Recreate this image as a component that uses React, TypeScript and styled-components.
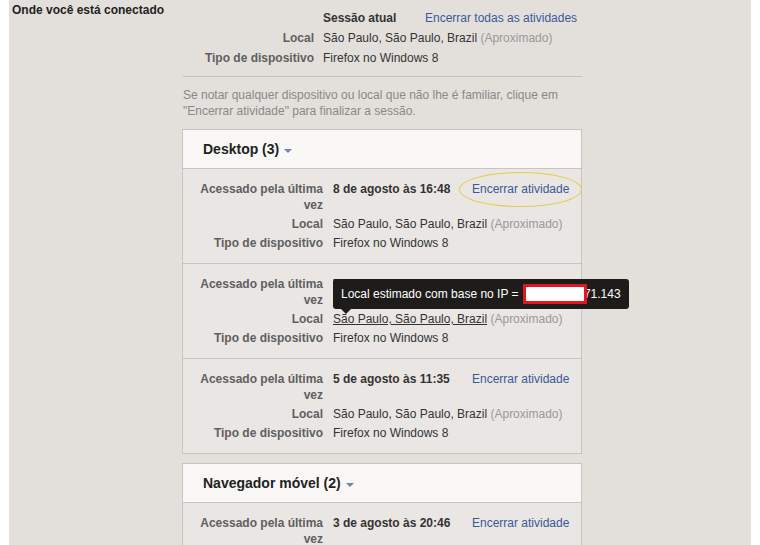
import styled, { createGlobalStyle } from "styled-components";

const GlobalStyle = createGlobalStyle`
  body {
    margin: 0;
    background: #fff;
    font-family: "Liberation Sans", Arial, sans-serif;
    font-size: 12px;
    color: #333;
  }
`;

const Page = styled.div`
  margin: 0 9px;
  min-height: 545px;
  background: #e3e0dc;
  display: grid;
  grid-template-columns: 170px 400px;
  padding: 2px 0 0 3px;
  box-sizing: border-box;
`;

const SectionLabel = styled.div`
  font-weight: bold;
  line-height: 16px;
  color: #222;
`;

const Column = styled.div`
  display: flex;
  flex-direction: column;
`;

const SessionGrid = styled.div`
  display: grid;
  grid-template-columns: 132px 93px 1fr;
  column-gap: 9px;
  margin-top: 6px;
  line-height: 16px;

  & > * {
    padding: 2px 0;
  }
`;

const Label = styled.div`
  font-weight: bold;
  color: #5f5f5f;
  text-align: right;
`;

const Value = styled.div<{ $bold?: boolean; $wide?: boolean }>`
  position: relative;
  color: #333;
  font-weight: ${(p) => (p.$bold ? "bold" : "normal")};
  grid-column: ${(p) => (p.$wide ? "2 / span 2" : "auto")};
  white-space: nowrap;
`;

const Muted = styled.span`
  color: #999;
`;

const Link = styled.a`
  position: relative;
  color: #3b5998;
  text-decoration: none;
  white-space: nowrap;
`;

const Highlight = styled.span`
  position: absolute;
  inset: -10px -13px -11px -13px;
  border: 1px solid #e0cf4c;
  border-radius: 50%;
  pointer-events: none;
`;

const Divider = styled.hr`
  border: 0;
  border-top: 1px solid #c4c1bd;
  margin: 8px 0 0 1px;
`;

const Notice = styled.p`
  margin: 10px 0 10px 1px;
  color: #888;
  line-height: 16px;
`;

const Card = styled.div`
  border: 1px solid #c8c5c1;
  background: #e9e6e3;
  margin-bottom: 9px;
`;

const CardHeader = styled.div`
  height: 38px;
  background: #f9f8f7;
  border-bottom: 1px solid #c8c5c1;
  display: flex;
  align-items: center;
  padding-left: 20px;
  font-size: 14px;
  font-weight: bold;
  color: #222;
  gap: 5px;
`;

const Caret = styled.span`
  width: 0;
  height: 0;
  border-left: 4px solid transparent;
  border-right: 4px solid transparent;
  border-top: 4px solid #6d84b4;
  margin-top: 3px;
`;

const Entry = styled.div`
  display: grid;
  grid-template-columns: 124px 129px 1fr;
  column-gap: 10px;
  row-gap: 3px;
  padding: 12px 0 12px 16px;
  line-height: 16px;
  border-bottom: 1px solid #c8c5c1;

  &:last-child {
    border-bottom: 0;
  }
`;

const Underlined = styled.span`
  text-decoration: underline;
`;

const Tooltip = styled.div`
  position: absolute;
  left: 0;
  bottom: calc(100% + 2px);
  height: 30px;
  display: flex;
  align-items: center;
  padding: 0 8px;
  background: #1e1c1b;
  border-radius: 3px;
  color: #fff;
  white-space: nowrap;
  z-index: 2;

  &::after {
    content: "";
    position: absolute;
    left: 8px;
    top: 100%;
    border-left: 5px solid transparent;
    border-right: 5px solid transparent;
    border-top: 5px solid #1e1c1b;
  }
`;

const Redacted = styled.span`
  position: relative;
  display: inline-block;
  width: 58px;
  height: 14px;
  background: #fff;
  border: 3px solid #e3151e;
  margin: 0 -3px 0 1px;
`;

type Session = {
  date: string;
  action?: boolean;
  highlight?: boolean;
  tooltip?: boolean;
};

const desktop: Session[] = [
  { date: "8 de agosto às 16:48", action: true, highlight: true },
  { date: "7 de agosto às 20:12", tooltip: true },
  { date: "5 de agosto às 11:35", action: true },
];

const mobile: Session[] = [{ date: "3 de agosto às 20:46", action: true }];

function SessionEntry({ s }: { s: Session }) {
  return (
    <Entry>
      <Label>Acessado pela última vez</Label>
      <Value $bold>{s.date}</Value>
      <div>
        {s.action && (
          <Link href="#">
            Encerrar atividade
            {s.highlight && <Highlight />}
          </Link>
        )}
      </div>
      <Label>Local</Label>
      <Value $wide>
        {s.tooltip ? (
          <>
            <Tooltip>
              Local estimado com base no IP =&nbsp;
              <Redacted />
              71.143
            </Tooltip>
            <Underlined>São Paulo, São Paulo, Brazil</Underlined>
          </>
        ) : (
          "São Paulo, São Paulo, Brazil"
        )}{" "}
        <Muted>(Aproximado)</Muted>
      </Value>
      <Label>Tipo de dispositivo</Label>
      <Value $wide>Firefox no Windows 8</Value>
    </Entry>
  );
}

function DeviceCard({ title, items }: { title: string; items: Session[] }) {
  return (
    <Card>
      <CardHeader>
        {title}
        <Caret />
      </CardHeader>
      {items.map((s, i) => (
        <SessionEntry key={i} s={s} />
      ))}
    </Card>
  );
}

export default function App() {
  return (
    <>
      <GlobalStyle />
      <Page>
        <SectionLabel>Onde você está conectado</SectionLabel>
        <Column>
          <SessionGrid>
            <div />
            <Value $bold>Sessão atual</Value>
            <div>
              <Link href="#">Encerrar todas as atividades</Link>
            </div>
            <Label>Local</Label>
            <Value $wide>
              São Paulo, São Paulo, Brazil <Muted>(Aproximado)</Muted>
            </Value>
            <Label>Tipo de dispositivo</Label>
            <Value $wide>Firefox no Windows 8</Value>
          </SessionGrid>
          <Divider />
          <Notice>
            Se notar qualquer dispositivo ou local que não lhe é familiar, clique em
            "Encerrar atividade" para finalizar a sessão.
          </Notice>
          <DeviceCard title="Desktop (3)" items={desktop} />
          <DeviceCard title="Navegador móvel (2)" items={mobile} />
        </Column>
      </Page>
    </>
  );
}
